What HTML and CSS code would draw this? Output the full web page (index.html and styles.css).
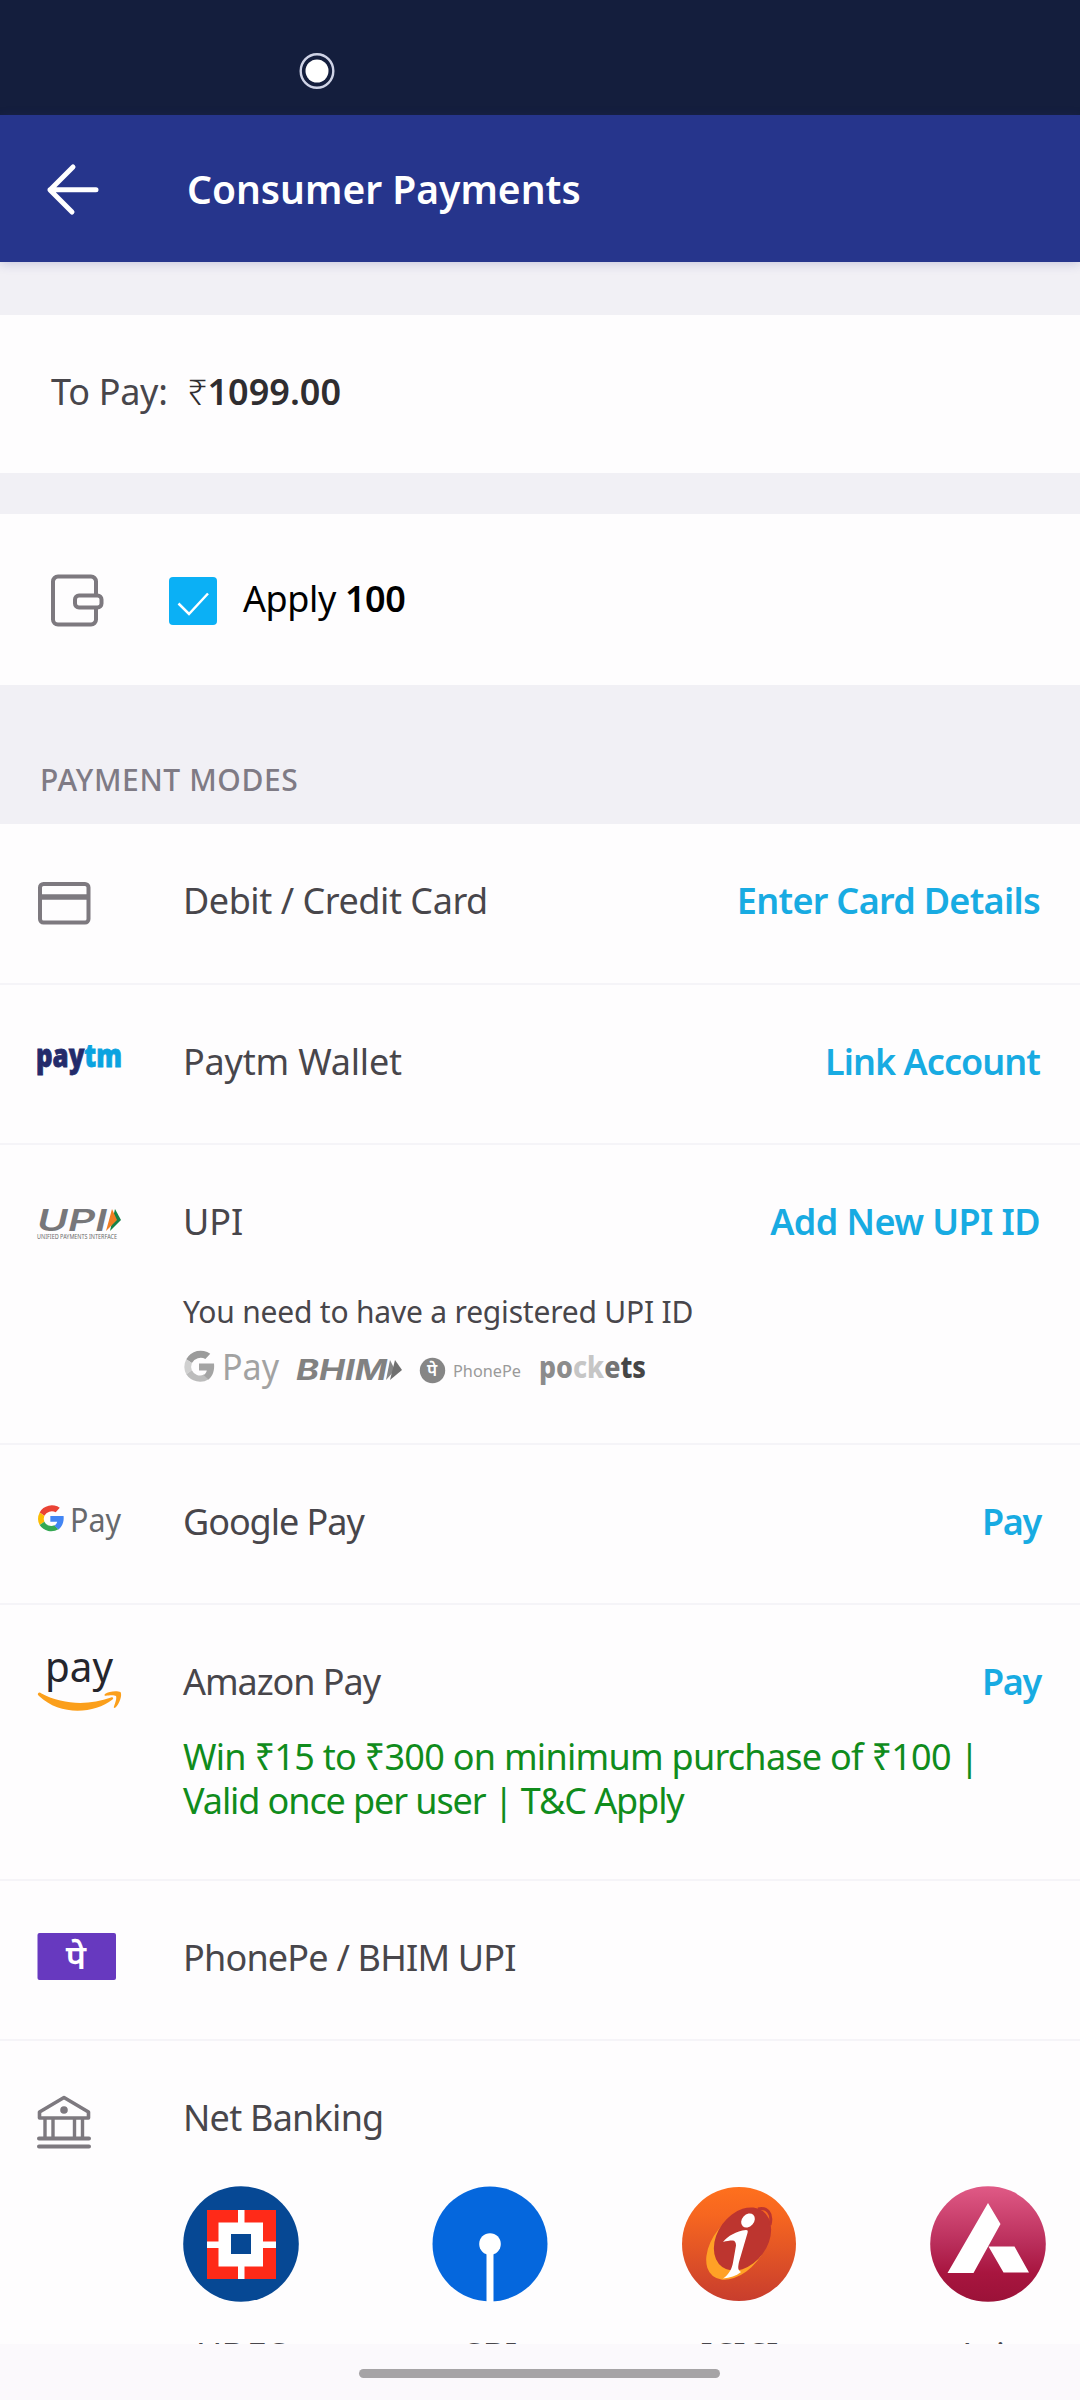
FILE: index.html
```html
<!DOCTYPE html>
<html lang="en">
<head>
<meta charset="utf-8">
<title>Consumer Payments</title>
<link rel="stylesheet" href="styles.css">
</head>
<body>
<div class="screen">
  <div class="status-bar">
    <svg class="record-dot" viewBox="0 0 36 38"><ellipse cx="18" cy="19" rx="16.300" ry="16.800" fill="none" stroke="#cfd3e6" stroke-width="2.400"/><ellipse cx="18" cy="19" rx="11.500" ry="11.500" fill="#fff"/></svg>
  </div>
  <header class="app-bar">
    <svg class="back" viewBox="0 0 54 54" fill="none" stroke="#fff" stroke-width="5" stroke-linecap="round" stroke-linejoin="round"><path d="M27 5 4 28l22 22M4 27.700h46"/></svg>
    <h1>Consumer Payments</h1>
  </header>

  <main class="content">
    <section class="panel to-pay">
      <span class="label">To Pay:</span>
      <span class="amount"><span class="rupee">₹</span><b>1099.00</b></span>
    </section>

    <section class="panel apply">
      <svg class="wallet" viewBox="0 0 56 56" fill="none" stroke="#7d797f" stroke-width="4"><path d="M47 22V8.500a5 5 0 0 0-5-5H9a5 5 0 0 0-5 5v38a5 5 0 0 0 5 5h33a5 5 0 0 0 5-5V35"/><rect x="26" y="22.500" width="26.500" height="12" rx="4"/></svg>
      <span class="checkbox"><svg viewBox="0 0 48 48" fill="none" stroke="#fff" stroke-width="2.500"><path d="M9.500 26.500 20 37 39 16.500"/></svg></span>
      <span class="apply-text">Apply <b>100</b></span>
    </section>

    <h2 class="section-title">PAYMENT MODES</h2>

    <ul class="modes">
      <li class="mode first">
        <svg class="icon" viewBox="0 0 90 80" fill="none" stroke="#7d797f" stroke-width="4"><rect x="3" y="15" width="48.500" height="38.500" rx="3.500"/><path d="M3 28h49" stroke-width="5.500"/></svg>
        <div class="body"><div class="line"><span class="name t-card">Debit / Credit Card</span><a class="action a-card">Enter Card Details</a></div></div>
      </li>
      <li class="mode">
        <svg class="icon" viewBox="0 0 90 80"><text class="paytm" x="-1" y="37" textLength="86" lengthAdjust="spacingAndGlyphs"><tspan fill="#232b6b" stroke="#232b6b">pay</tspan><tspan fill="#0aa3e0" stroke="#0aa3e0">tm</tspan></text></svg>
        <div class="body"><div class="line"><span class="name t-paytm">Paytm Wallet</span><a class="action a-link">Link Account</a></div></div>
      </li>
      <li class="mode upi">
        <svg class="icon" viewBox="0 0 90 80"><text class="upi-mark" x="0" y="40.500" textLength="70" lengthAdjust="spacingAndGlyphs">UPI</text><path d="M78 19 84 30 73 41z" fill="#148247"/><path d="M75 19 80 30 69 41z" fill="#ef7d22"/><text class="upi-caption" x="0" y="48.500" textLength="80" lengthAdjust="spacingAndGlyphs">UNIFIED PAYMENTS INTERFACE</text></svg>
        <div class="body">
          <div class="line"><span class="name">UPI</span><a class="action a-upi">Add New UPI ID</a></div>
          <p class="note">You need to have a registered UPI ID</p>
          <div class="upi-apps">
            <svg class="gpay-gray" viewBox="0 0 96 50"><g transform="translate(-6 -.2) scale(.75)"><path fill="#9b9b9b" d="M11 14A22 22 0 0 1 43 6.500l-6.500 7A13.500 13.500 0 0 0 18.500 19z"/><path fill="#d0d0d0" d="M11 14a22 22 0 0 0 0 20l7.500-5.500a13 13 0 0 1 0-9.500z"/><path fill="#bcbcbc" d="M11 34a22 22 0 0 0 30 6.500l-6.500-6.100a12 12 0 0 1-16-5.900z"/><path fill="#a4a4a4" d="M28 19.500h20c1 9-1.500 16.500-7.500 21.500l-6.500-6c2.500-1.600 4-4 4.400-6.200H28z"/></g><text x="38" y="31" class="gray-pay" textLength="57" lengthAdjust="spacingAndGlyphs">Pay</text></svg>
            <svg class="bhim" viewBox="0 0 106 50"><text x="0" y="31" class="bhim-mark" textLength="91" lengthAdjust="spacingAndGlyphs">BHIM</text><path fill="#858585" d="M94 11 99 21 90 31z"/><path fill="#6f6f6f" d="M99 11 106 21 94 31z"/></svg>
            <svg class="phonepe-gray" viewBox="0 0 104 50"><circle cx="13.500" cy="21.500" r="12.700" fill="#868686"/><text x="13" y="27" class="pe-small">पे</text><text x="34" y="28" class="phonepe-name" textLength="68" lengthAdjust="spacingAndGlyphs">PhonePe</text></svg>
            <svg class="pockets" viewBox="0 0 108 50"><text x="0" y="29" class="pockets-mark" textLength="107" lengthAdjust="spacingAndGlyphs"><tspan fill="#8c8c8c">po</tspan><tspan fill="#c6c6c6">ck</tspan><tspan fill="#747474">e</tspan><tspan fill="#454545">ts</tspan></text></svg>
          </div>
        </div>
      </li>
      <li class="mode">
        <svg class="icon" viewBox="0 0 90 80"><g transform="translate(-4.300 13.700) scale(.63)"><path fill="#ea4335" d="M11 14A22 22 0 0 1 43 6.500l-6.500 7A13.500 13.500 0 0 0 18.500 19z"/><path fill="#fbbc05" d="M11 14a22 22 0 0 0 0 20l7.500-5.500a13 13 0 0 1 0-9.500z"/><path fill="#34a853" d="M11 34a22 22 0 0 0 30 6.500l-6.500-6.100a12 12 0 0 1-16-5.900z"/><path fill="#4285f4" d="M28 19.500h21c1 9-2 16.500-8 21.500l-6.500-6c2.500-1.600 4-4 4.400-6.200H28z"/></g><text x="33" y="42" class="color-pay" textLength="51" lengthAdjust="spacingAndGlyphs">Pay</text></svg>
        <div class="body"><div class="line"><span class="name t-google">Google Pay</span><a class="action a-pay">Pay</a></div></div>
      </li>
      <li class="mode amazon">
        <svg class="icon" viewBox="0 0 90 80"><text x="8" y="32" class="amazon-pay" textLength="68" lengthAdjust="spacingAndGlyphs">pay</text><path fill="#fb9f1b" d="M1 43.500c1-1.500 2-1 3.500 0C26 55 52 55.500 74 47.500c2-1 3 1 1.500 2C57 64 23 66 2 46 1 45 .5 44.500 1 43.500z"/><path fill="#fb9f1b" d="M68 44c4-3 12-3.500 15.500-2 2 3-1 12-5 15.500-1.500 1-2 .3-1.500-1 1-3 3-8 2-10.500-2-1.200-7.500-.6-10-.2-1.500.2-2-.7-1-1.800z"/></svg>
        <div class="body">
          <div class="line"><span class="name t-google">Amazon Pay</span><a class="action a-pay">Pay</a></div>
          <p class="offer"><span class="offer-a">Win ₹15 to ₹300 on minimum purchase of ₹100 |</span><br><span class="offer-b">Valid once per user | T&amp;C Apply</span></p>
        </div>
      </li>
      <li class="mode">
        <svg class="icon" viewBox="0 0 90 80"><rect x=".5" y="7" width="78.500" height="47" rx="2" fill="#6739bf"/><text x="39" y="42.500" class="pe-large">पे</text></svg>
        <div class="body"><div class="line"><span class="name t-phonepe">PhonePe / BHIM UPI</span></div></div>
      </li>
      <li class="mode banking">
        <svg class="icon" viewBox="0 0 90 80" fill="none" stroke="#7d797f" stroke-width="3.600"><path d="M2.500 32V26L27 11.500 51.500 26v6z" stroke-linejoin="round"/><circle cx="27" cy="24" r="3.800" fill="#7d797f" stroke="none"/><path d="M8 33v18M16 33v18M37.500 33v18M45.500 33v18" stroke-width="3.400"/><path d="M2 52.500h50M2 60.500h50" stroke-width="4" stroke-linecap="round"/></svg>
        <div class="body">
          <div class="line"><span class="name t-net">Net Banking</span></div>
          <div class="banks">
            <div class="bank"><svg viewBox="0 0 116 116"><circle cx="58" cy="58" r="57.800" fill="#064894"/><path fill="#ff2a18" d="M24 24h69v69H24z"/><path fill="#fff" d="M55 24h6.500v69H55zM24 55.500h69V62H24zM35.500 36.500H80v44H35.500z"/><path fill="#064894" d="M48 48h20v20H48z"/></svg><span>HDFC</span></div>
            <div class="bank"><svg viewBox="0 0 116 116"><circle cx="58" cy="58" r="57.500" fill="#0567dd"/><circle cx="58" cy="58" r="10.800" fill="#fff"/><path fill="#fff" d="M54.500 60h7v56h-7z"/></svg><span>SBI</span></div>
            <div class="bank"><svg viewBox="0 0 116 116"><defs><linearGradient id="orange" x1="0" y1="0" x2="0" y2="1"><stop offset="0" stop-color="#ff701d"/><stop offset=".25" stop-color="#f66620"/><stop offset="1" stop-color="#c83d2d"/></linearGradient></defs><circle cx="58" cy="58" r="57" fill="url(#orange)"/><ellipse cx="57" cy="59" rx="25" ry="40" transform="rotate(39 57 59)" fill="#ffa126"/><ellipse cx="61.500" cy="53" rx="25" ry="34.500" transform="rotate(36 61.500 53)" fill="#bd352f"/><path d="M89 39c3-12-3-18-12-16" fill="none" stroke="#bd352f" stroke-width="3"/><ellipse cx="67" cy="34.500" rx="6" ry="7.800" transform="rotate(42 67 34.500)" fill="#fff"/><path fill="#fff" d="M42 56c5-6 13-11 23-12 2 0 2 1 1.500 3L58 76c-1 5-1.500 8 2 10-5 4-11 6-18 6.500 6-4 9-10 10-16l3-17c0-3-1-5-3.500-5-3 0-6 .5-9.500 1.500z"/></svg><span>ICICI</span></div>
            <div class="bank"><svg viewBox="0 0 116 116"><defs><linearGradient id="wine" x1="0" y1="0" x2="0" y2="1"><stop offset="0" stop-color="#e05a86"/><stop offset=".5" stop-color="#b92d5a"/><stop offset=".75" stop-color="#a8153f"/><stop offset="1" stop-color="#9b1238"/></linearGradient></defs><circle cx="58" cy="58" r="57.800" fill="url(#wine)"/><path fill="#fff" d="M58 17 70.500 38 43.500 87H17.500zM58.500 60.500h26L99 86.500H73.500z"/></svg><span>Axis</span></div>
          </div>
        </div>
      </li>
    </ul>
  </main>

  <footer class="nav-bar"><span class="handle"></span></footer>
</div>
</body>
</html>
```
FILE: styles.css
```css
* { box-sizing: border-box; }

body {
  margin: 0;
  font-family: "Noto Sans", sans-serif;
  font-size: 36px;
  line-height: 50px;
  color: #48464b;
}

h1, h2, p, ul { margin: 0; padding: 0; }
ul { list-style: none; }
svg { display: block; flex: none; overflow: visible; }
b { font-weight: 600; }

.screen {
  display: flex;
  flex-direction: column;
  width: 1080px;
  height: 2400px;
  overflow: hidden;
  background: #f1f0f5;
}

.status-bar {
  flex: none;
  height: 115px;
  padding: 52px 0 0 299px;
  background: #141e3d;
}
.record-dot { width: 36px; height: 38px; }

.app-bar {
  flex: none;
  z-index: 1;
  display: flex;
  align-items: center;
  height: 147px;
  padding: 0 0 0 46px;
  background: #26358c;
  box-shadow: 0 2px 10px rgba(60, 60, 140, .22);
}
.back { width: 54px; height: 54px; margin-right: 87px; }
.app-bar h1 {
  font-size: 39px;
  font-weight: 600;
  letter-spacing: 0;
  color: #fff;
}

.content {
  flex: 1;
  min-height: 0;
  overflow: hidden;
  padding-top: 53px;
}

.panel {
  display: flex;
  align-items: center;
  background: #fefdfe;
}

.to-pay { height: 158px; padding: 0 0 5px 51px; gap: 20px; }
.to-pay .label { letter-spacing: -.3px; }
.to-pay .amount { display: flex; color: #2f2d30; }
.to-pay .rupee { font-weight: 300; font-size: 35px; }

.apply { height: 171px; margin-top: 41px; padding-left: 49px; }
.wallet { width: 56px; height: 56px; margin-top: 3px; }
.checkbox {
  width: 48px;
  height: 48px;
  margin: 2px 0 0 64px;
  border-radius: 4px;
  background: #0bb0f5;
}
.apply-text { margin: -2px 0 0 26px; color: #000; letter-spacing: -.4px; }

.section-title {
  height: 139px;
  padding: 80px 0 0 40px;
  font-size: 30px;
  line-height: 30px;
  font-weight: 550;
  letter-spacing: .6px;
  color: #7f7b85;
}

.mode {
  display: flex;
  height: 160px;
  padding: 51px 40px 0 37px;
  border-bottom: 2px solid #f5f4f8;
  background: #fefdfe;
}
.mode.first { height: 161px; }
.mode.upi { height: 300px; }
.mode.amazon { height: 276px; }
.mode.banking { height: 400px; }

.icon { width: 90px; height: 80px; margin: -6px 56px 0 0; }
.body { flex: 1; min-width: 0; padding-top: 1px; }
.line { display: flex; justify-content: space-between; }

.action { font-weight: 600; color: #18abe2; }
.t-card { letter-spacing: -.45px; }
.t-paytm { letter-spacing: -.2px; }
.t-google { letter-spacing: -1.05px; }
.t-phonepe { letter-spacing: -.8px; }
.t-net { letter-spacing: -.75px; }
.a-card { letter-spacing: -.7px; }
.a-link { letter-spacing: -.95px; }
.a-upi { letter-spacing: -.6px; }
.a-pay { letter-spacing: -1.3px; margin-right: -1px; }

.note {
  margin-top: 45px;
  font-size: 30px;
  line-height: 40px;
  letter-spacing: -.2px;
}
.upi-apps { display: flex; margin: 17px 0 0 1px; }
.upi-apps svg { height: 50px; }
.gpay-gray { width: 96px; margin-right: 16px; }
.bhim { width: 106px; margin-right: 17px; }
.phonepe-gray { width: 104px; margin-right: 16px; }
.pockets { width: 108px; }

.offer { margin-top: 28px; line-height: 44px; color: #108c1c; white-space: nowrap; }
.offer-a { letter-spacing: -.73px; }
.offer-b { letter-spacing: -1.1px; }

.banks { display: flex; gap: 133px; margin-top: 43px; }
.bank { flex: none; display: flex; flex-direction: column; align-items: center; width: 116px; }
.bank svg { width: 116px; height: 116px; }
.bank span { margin-top: 29px; letter-spacing: -1px; }

.paytm { font: 900 32px "Noto Sans", sans-serif; stroke-width: .8; }
.upi-mark { font: italic 600 30px Inter, sans-serif; fill: #77777a; }
.upi-caption { font: 7px "Noto Sans", sans-serif; fill: #6a6a6a; }
.color-pay { font: 33px "Noto Sans", sans-serif; fill: #67696d; }
.gray-pay { font: 36px "Noto Sans", sans-serif; fill: #a2a2a2; }
.bhim-mark { font: italic 700 28px Inter, sans-serif; fill: #818181; }
.pe-small { font: 600 17px "Noto Sans", sans-serif; fill: #fff; text-anchor: middle; }
.phonepe-name { font: 17px "Noto Sans", sans-serif; fill: #9a9a9a; }
.pockets-mark { font: 800 30px "Noto Sans", sans-serif; }
.amazon-pay { font: 41px "Noto Sans", sans-serif; fill: #25262d; }
.pe-large { font: 600 34px "Noto Sans", sans-serif; fill: #fff; text-anchor: middle; }

.nav-bar {
  flex: none;
  display: flex;
  justify-content: center;
  height: 56px;
  padding: 25px 1px 0 0;
  background: #fbf9fc;
}
.handle { width: 361px; height: 9px; border-radius: 5px; background: #a6a4a6; }
```
